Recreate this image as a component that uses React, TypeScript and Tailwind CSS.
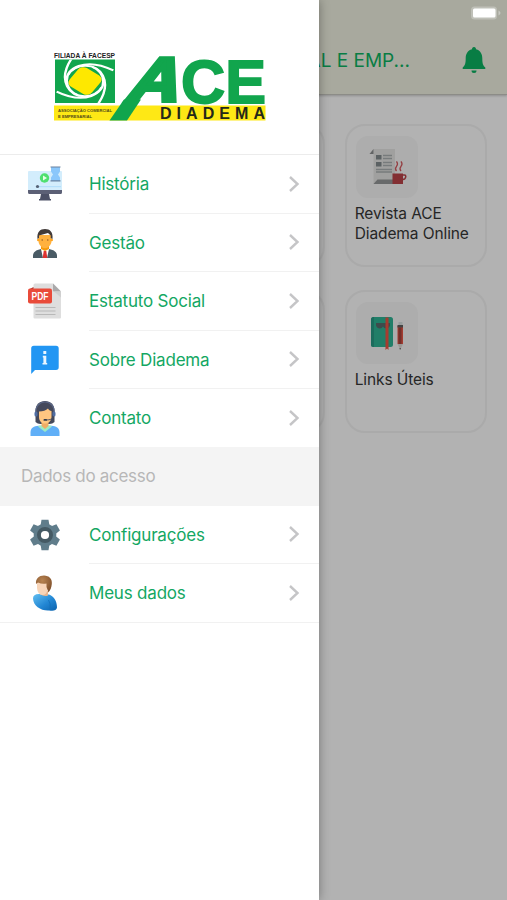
import type { ReactNode } from "react";

interface MenuItem {
  label: string;
  icon: ReactNode;
}

function HistoryIcon() {
  return (
    <svg viewBox="0 0 36 36" className="h-9 w-9">
      <rect x="1" y="5" width="34" height="20" rx="1" fill="#d3edfc" />
      <path d="M1 24h34v2.500a1.500 1.500 0 0 1-1.500 1.500h-31A1.500 1.500 0 0 1 1 26.500z" fill="#5c6076" />
      <path d="M14 28h8l1 5h1v1.500H12V33h1z" fill="#4c5066" />
      <rect x="9" y="20" width="25" height="1.200" fill="#b5dffa" />
      <circle cx="10.500" cy="20.500" r="1.600" fill="#556175" />
      <circle cx="17.500" cy="12" r="4.700" fill="#4fe070" />
      <path d="M16 9.500l4 2.500-4 2.500z" fill="#e8ffe9" />
      <path d="M24 1h9v4.500l-2 3 2 3V15h-9v-3.500l2-3-2-3z" fill="#8ac7fb" />
      <path d="M23.500 1h10M23.500 14.800h10" stroke="#6a82a0" strokeWidth="1.200" />
    </svg>
  );
}

function ManagerIcon() {
  return (
    <svg viewBox="0 0 36 36" className="h-9 w-9">
      <path d="M6 33v-2c0-4 3-6 8-7h8c5 1 8 3 8 7v2z" fill="#4a5b65" />
      <path d="M14 20h8v5L18 28l-4-3z" fill="#f59a0c" />
      <path d="M14 24l4 2 4-2-2 9h-4z" fill="#fff" />
      <path d="M16.700 26h2.600l1 7h-4.600z" fill="#dd3431" />
      <path d="M11.500 10h13v6c0 4-3.500 7.200-6.500 7.200S11.500 20 11.500 16z" fill="#ffb13f" />
      <circle cx="11.300" cy="15" r="1.300" fill="#ffa51f" />
      <circle cx="24.700" cy="15" r="1.300" fill="#ffa51f" />
      <path d="M10.500 14C9.700 7 13 4 18 4S26.300 7 25.500 14l-1.800-1v-2.500L21 8l-9 2.500V13z" fill="#433c3a" />
      <circle cx="15.200" cy="15" r=".8" fill="#985e25" />
      <circle cx="20.800" cy="15" r=".8" fill="#985e25" />
    </svg>
  );
}

function PdfIcon() {
  return (
    <svg viewBox="0 0 36 36" className="h-9 w-9">
      <path d="M8 .5h18l8 8v26a1 1 0 0 1-1 1H7.500a1 1 0 0 1-1-1V2A1.500 1.500 0 0 1 8 .5z" fill="#dedede" />
      <path d="M26 .5l8 8h-7a1 1 0 0 1-1-1z" fill="#aaa9aa" />
      <path d="M27 8.500h7v6z" fill="#cfcfcf" />
      <path d="M2 6.500l4.500-2.500v2.500z" fill="#9e2b22" />
      <rect x="1" y="5.500" width="24" height="15" rx="2" fill="#e94b3a" />
      <text x="4.500" y="17" fontSize="10.500" fontWeight="700" textLength="17" lengthAdjust="spacingAndGlyphs" fill="#fff" className="font-['Liberation_Sans',sans-serif]">
        PDF
      </text>
      <path d="M8.500 24.500h20M8.500 28h20M8.500 31.500h20" stroke="#b8b8b8" strokeWidth="1.100" />
    </svg>
  );
}

function InfoIcon() {
  return (
    <svg viewBox="0 0 36 36" className="h-9 w-9">
      <path d="M7 3.800h22a2.700 2.700 0 0 1 2.700 2.700v18.800A2.700 2.700 0 0 1 29 28H8l-3.800 4V6.500A2.700 2.700 0 0 1 7 3.800z" fill="#2296f3" />
      <rect x="16.300" y="9" width="3" height="3" rx=".6" fill="#e9f6ff" />
      <path d="M15.800 13.700h3.500v7.300h.9v1.600h-4.700V21h.9v-5.500h-.6z" fill="#e9f6ff" />
    </svg>
  );
}

function SupportIcon() {
  return (
    <svg viewBox="0 0 36 36" className="h-9 w-9">
      <path d="M8.500 22V11C8.500 4.500 12.500 1 18 1s9.500 3.500 9.500 10v11q-2 2-5 2h-9q-3 0-5-2z" fill="#45495b" />
      <path d="M3.500 36v-3.500c0-5 3.500-6.500 8-6.800h13c4.500.3 8 1.800 8 6.800V36z" fill="#60aff7" />
      <path d="M12.500 25.500h11l1.500 1L18 32l-7-5.500z" fill="#9aebc6" />
      <path d="M14.500 21h7v5L18 29l-3.500-3z" fill="#efad65" />
      <path d="M12 11.500c4 0 7-1 9-3 .7 1.500 2 2.300 3.500 2.500v6c0 4-3 6.500-6.500 6.500S12 21 12 17z" fill="#ffc681" />
      <path d="M9 14C8 6 12.500 2 18 2s10 4 9 12" fill="none" stroke="#5a6685" strokeWidth="1.200" />
      <rect x="7.500" y="11.500" width="3" height="5" rx="1.500" fill="#506da2" />
      <rect x="25.500" y="11.500" width="3" height="5" rx="1.500" fill="#506da2" />
      <path d="M26.500 16.500q-1 3.500-7.500 3.500" fill="none" stroke="#444b60" strokeWidth=".9" />
      <rect x="16.500" y="19" width="3.500" height="1.800" rx=".9" fill="#343a46" />
    </svg>
  );
}

function GearIcon() {
  return (
    <svg viewBox="0 0 36 36" className="h-9 w-9">
      <g fill="#607d8b">
        <path d="M14.500 2.800h7l1 6h-9zM14.500 33.200h7l1-6h-9z" />
        <path d="M14.500 2.800h7l1 6h-9zM14.500 33.200h7l1-6h-9z" transform="rotate(60 18 18)" />
        <path d="M14.500 2.800h7l1 6h-9zM14.500 33.200h7l1-6h-9z" transform="rotate(120 18 18)" />
        <circle cx="18" cy="18" r="11.300" />
      </g>
      <circle cx="18" cy="18" r="6" fill="none" stroke="#455a64" strokeWidth="4" />
      <circle cx="18" cy="18" r="4.100" fill="#fff" />
    </svg>
  );
}

function PersonIcon() {
  return (
    <svg viewBox="0 0 36 36" className="h-9 w-9">
      <defs>
        <linearGradient id="shirt" x1="0" y1="0" x2="1" y2="1">
          <stop offset="0" stopColor="#62bff1" />
          <stop offset=".55" stopColor="#2387d4" />
          <stop offset="1" stopColor="#0b62ad" />
        </linearGradient>
        <radialGradient id="hair" cx=".4" cy=".3" r=".8">
          <stop offset="0" stopColor="#b78350" />
          <stop offset="1" stopColor="#7a4a27" />
        </radialGradient>
      </defs>
      <path d="M6 23.500c0-3 2-4.500 6-4.500l10 .5c4.500 1.500 8 6 8 13-.5 3.500-4 3.500-8 3C14 36 6.300 31 6 23.500z" fill="url(#shirt)" />
      <path d="M21.500 25q2.500 3 1.500 9.500" fill="none" stroke="#1470b9" strokeWidth=".8" />
      <path d="M13 16h8v4.500Q17 22 13 19z" fill="#e9b58e" />
      <path d="M10 7h10.500v8q-1 5-5 5-5-.5-5.500-7z" fill="#f8d5b8" />
      <path d="M9 9C8.500 3.500 12 .5 17 .5c5 0 8.500 3.500 7.800 8.500-.4 3.500-1.300 6-3.300 8.500L19.500 12V8.500Q15 9.500 11 7.500z" fill="url(#hair)" />
    </svg>
  );
}

function NewspaperIcon() {
  return (
    <svg viewBox="0 0 40 40" className="h-10 w-10">
      <path d="M6.500 2H28v35H6.500z" fill="#a0a09f" />
      <path d="M6.500 2v5h-4z" fill="#626465" />
      <path d="M10.500 32.500H28V37H6.500z" fill="#686a6b" />
      <path d="M9 8h5.500v4.500H9zM9 15h5.500v4.500H9z" fill="#5b6163" />
      <path d="M16 8.500h9M16 11.500h9M16 15.500h9M16 18.500h9M9 22.500h16M9 25h16" stroke="#777b7c" strokeWidth="1.300" />
      <path d="M29.500 24q-2-2.200 0-4.700t0-5M34 24q-2-2.200 0-4.700t0-5" fill="none" stroke="#943e42" strokeWidth="1.300" />
      <path d="M25.500 26.500H36v10.500H25.500z" fill="#832f33" />
      <path d="M36 28h1.500q1.300 0 1.300 1.500-.3 3-3 3" fill="none" stroke="#832f33" strokeWidth="1.500" />
    </svg>
  );
}

function NotebookIcon() {
  return (
    <svg viewBox="0 0 40 40" className="h-10 w-10">
      <rect x="4" y="4" width="22" height="30" rx="2.500" fill="#217e68" />
      <path d="M4 6.500A2.500 2.500 0 0 1 6.500 4H7v30h-.5A2.500 2.500 0 0 1 4 31.500z" fill="#1c6c5d" />
      <path d="M9 10h14v2.500c-1 3.500-5.500 4-7 1-1.500 3-6 2.500-7-1z" fill="#3e4b4c" />
      <path d="M18.500 4.500h3V37l-1.500-1.500-1.500 1.500z" fill="#a73b2f" />
      <path d="M31.500 9h4v4h-4z" fill="#979d9d" />
      <path d="M30.500 13h5.500v18h-5.500z" fill="#a33c31" />
      <path d="M31.500 14.500h3V31h-3z" fill="#742f2a" />
      <path d="M30.500 12h5.500v2.500h-5.500z" fill="#444" />
      <path d="M30.500 31h5.500l-2.700 5.500z" fill="#9b9895" />
      <circle cx="33.200" cy="35.700" r=".8" fill="#484848" />
    </svg>
  );
}

const swirlAngles = [0, 90, 180, 270];

function Logo() {
  return (
    <svg viewBox="0 0 212 70" className="h-[70px] w-[212px] overflow-visible font-['Liberation_Sans',sans-serif]">
      <defs>
        <clipPath id="emblem">
          <rect x="1" y="7.500" width="60" height="43.500" />
        </clipPath>
      </defs>
      <text x="0" y="6" fontSize="6.500" fontWeight="700" textLength="61" lengthAdjust="spacingAndGlyphs" fill="#222">
        FILIADA À FACESP
      </text>
      <rect x="1" y="7.500" width="60" height="43.500" fill="#11a54d" />
      <rect y="53.500" width="211.500" height="15" fill="#fee815" />
      <g clipPath="url(#emblem)">
        <g transform="translate(31 29) scale(1.050 .88)">
          <rect x="-13" y="-13" width="26" height="26" rx="6" fill="#fee800" transform="rotate(35)" />
          {swirlAngles.map((a) => (
            <path
              key={a}
              d="M-16 -7C-10 -20 10 -22 17 -6Q23 8 12 27"
              fill="none"
              stroke="#fff"
              strokeWidth="2.300"
              transform={`rotate(${a})`}
            />
          ))}
        </g>
      </g>
      <text x="4" y="60" fontSize="4.300" fontWeight="700" textLength="54" lengthAdjust="spacingAndGlyphs" fill="#514b19">
        ASSOCIAÇÃO COMERCIAL
      </text>
      <text x="4" y="66" fontSize="4.300" fontWeight="700" textLength="34" lengthAdjust="spacingAndGlyphs" fill="#514b19">
        E EMPRESARIAL
      </text>
      {/* green band under the A, crossing the yellow strip */}
      <path d="M70 47.500h17L73 68.500H55.500z" fill="#11a54d" />
      <text
        fontSize="62"
        fontWeight="700"
        textLength="52"
        lengthAdjust="spacingAndGlyphs"
        fill="#11a54d"
        stroke="#11a54d"
        strokeWidth="4"
        transform="translate(70 49) skewX(-21)"
      >
        A
      </text>
      <text x="127" y="50.500" fontSize="62" fontWeight="700" textLength="85" lengthAdjust="spacingAndGlyphs" fill="#11a54d" stroke="#11a54d" strokeWidth="1.800">
        CE
      </text>
      <text x="106" y="67" fontSize="16" fontWeight="700" textLength="105" fill="#242819">
        DIADEMA
      </text>
    </svg>
  );
}

function Battery() {
  return (
    <svg viewBox="0 0 32 16" className="h-4 w-8">
      <rect x="1" y="1.500" width="26" height="13" rx="3.500" fill="#bfc0b8" />
      <rect x="3" y="3.500" width="22.500" height="9" rx="1.500" fill="#fff" />
      <path d="M28.500 5.500q4 2.500 0 5z" fill="#c7c8c1" />
    </svg>
  );
}

function Bell() {
  return (
    <svg viewBox="0 0 24 28" className="h-7 w-6">
      <path d="M12 1c1.500 0 2 1 2 2.300 4.500 1.300 6.300 4.700 6.300 9.200 0 5 .7 7 3 9V23H.7v-1.500c2.300-2 3-4 3-9 0-4.500 1.800-7.900 6.300-9.200C10 2 10.500 1 12 1z" fill="#087d44" />
      <path d="M9.500 24.500h5a2.500 2.500 0 0 1-5 0z" fill="#087d44" />
    </svg>
  );
}

function Chevron() {
  return (
    <svg viewBox="0 0 12 18" className="h-[18px] w-3" fill="none" stroke="#c5c5c7" strokeWidth="2.400">
      <path d="M2 2l7.500 7L2 16" />
    </svg>
  );
}

const mainItems: MenuItem[] = [
  { label: "História", icon: <HistoryIcon /> },
  { label: "Gestão", icon: <ManagerIcon /> },
  { label: "Estatuto Social", icon: <PdfIcon /> },
  { label: "Sobre Diadema", icon: <InfoIcon /> },
  { label: "Contato", icon: <SupportIcon /> },
];

const accessItems: MenuItem[] = [
  { label: "Configurações", icon: <GearIcon /> },
  { label: "Meus dados", icon: <PersonIcon /> },
];

function MenuList({ items }: { items: MenuItem[] }) {
  return (
    <ul>
      {items.map((item, i) => (
        <li key={item.label} className="flex h-[58.5px] items-center pl-[27px]">
          <div className="w-[62px] shrink-0">{item.icon}</div>
          <div
            className={`flex h-full flex-1 items-center justify-between border-b pr-[19px] ${
              i < items.length - 1 ? "border-[#f1f1f1]" : "border-transparent"
            }`}
          >
            <span className="pt-[2px] text-[17px] tracking-[-0.2px] text-[#14a763]">{item.label}</span>
            <Chevron />
          </div>
        </li>
      ))}
    </ul>
  );
}

function Card({ title, icon }: { title?: string; icon?: ReactNode }) {
  return (
    <div className="h-[143px] rounded-[20px] border-2 border-[#aaaaaa] px-2 pt-[10px]">
      {icon && (
        <div className="ml-px flex h-[62px] w-[62px] items-center justify-center rounded-[12px] bg-[#adadad]">{icon}</div>
      )}
      {title && (
        <p className="mt-[6px] text-[15.5px] leading-[19.5px] tracking-[-0.1px] text-[#262626]">{title}</p>
      )}
    </div>
  );
}

export default function App() {
  return (
    <div className="relative h-[900px] w-[507px] overflow-hidden bg-[#b2b2b2] font-['Inter','Liberation_Sans',sans-serif]">
      <header className="h-[95px] border-b border-[#8c8c87] bg-[#a8a99e] shadow-[0_1px_2px_rgba(0,0,0,0.2)]">
        <div className="flex h-[26px] items-center justify-end pr-[5px]">
          <Battery />
        </div>
        <div className="flex h-[68px] items-center justify-end gap-[52px] pr-[21px]">
          <h1 className="pt-[2px] text-[19px] text-[#087d44]">AL E EMP...</h1>
          <Bell />
        </div>
      </header>

      <main className="grid grid-cols-3 gap-x-5 gap-y-[23px] px-5 pt-[29px]">
        <Card />
        <Card />
        <Card title="Revista ACE Diadema Online" icon={<NewspaperIcon />} />
        <Card />
        <Card />
        <Card title="Links Úteis" icon={<NotebookIcon />} />
      </main>

      {/* Drawer */}
      <aside className="absolute inset-y-0 left-0 w-[319px] bg-white shadow-[0_0_10px_rgba(0,0,0,0.35)]">
        <div className="flex h-[155px] justify-center border-b border-[#ececec] pt-[52px]">
          <Logo />
        </div>
        <MenuList items={mainItems} />
        <div className="-mt-px flex h-[59px] items-center bg-[#f4f4f4] pt-px pl-[21px] text-[17px] tracking-[-0.3px] text-[#b7b7b7]">
          Dados do acesso
        </div>
        <div className="h-[117.5px] border-b border-[#f1f1f1]">
          <MenuList items={accessItems} />
        </div>
      </aside>
    </div>
  );
}
